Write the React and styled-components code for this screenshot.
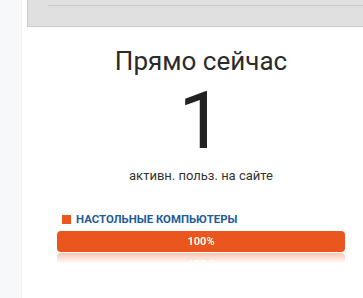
import styled, { createGlobalStyle } from 'styled-components';

const GlobalStyle = createGlobalStyle`
  body {
    margin: 0;
    background: #ffffff;
    font-family: Roboto, 'Liberation Sans', sans-serif;
  }
`;

const Page = styled.div`
  display: flex;
  height: 298px;
  overflow: hidden;
`;

const Sidebar = styled.div`
  width: 21px;
  flex-shrink: 0;
  background: #f7f8fa;
  border-right: 1px solid #eef0f3;
`;

const Main = styled.div`
  flex: 1;
  display: flex;
  flex-direction: column;
`;

const TopBar = styled.div`
  display: flex;
  height: 27px;
  padding-left: 5px;
`;

const Panel = styled.div`
  width: 320px;
  background: #e0e0e0;
  border: 1px solid #cbcbcb;
  border-top: none;
  padding: 5px 10px 0 20px;
`;

const PanelRule = styled.div`
  height: 1px;
  background: #c9c9c9;
`;

const PanelSide = styled.div`
  flex: 1;
  background: #e9e9e9;
`;

const Widget = styled.div`
  width: 288px;
  margin-left: 35px;
  display: flex;
  flex-direction: column;
  align-items: center;
`;

const Title = styled.div`
  margin-top: 19px;
  font-size: 26px;
  line-height: 30px;
  color: #2b2b2b;
`;

const BigNumber = styled.div`
  margin-top: 5px;
  font-size: 80px;
  line-height: 80px;
  font-weight: 400;
  color: #222222;
`;

const Caption = styled.div`
  margin-top: 7px;
  font-size: 13px;
  line-height: 16px;
  color: #333333;
`;

const Legend = styled.div`
  align-self: stretch;
  display: flex;
  align-items: center;
  gap: 5px;
  margin-top: 28px;
  padding-left: 5px;
`;

const Swatch = styled.span`
  width: 9px;
  height: 9px;
  background: ${(props) => props.color};
`;

const LegendLabel = styled.span`
  font-size: 11.4px;
  font-weight: 700;
  color: #1f5c99;
  text-transform: uppercase;
`;

const Bar = styled.div`
  align-self: stretch;
  margin-top: 5px;
  height: 21px;
  border-radius: 4px;
  background: ${(props) => props.color};
  color: #ffffff;
  font-size: 11px;
  font-weight: 700;
  display: flex;
  align-items: center;
  justify-content: center;
  -webkit-box-reflect: below 1px linear-gradient(transparent 50%, rgba(255, 255, 255, 0.35));
`;

const ORANGE = '#ea561d';

export default function App() {
  return (
    <>
      <GlobalStyle />
      <Page>
        <Sidebar />
        <Main>
          <TopBar>
            <Panel>
              <PanelRule />
            </Panel>
            <PanelSide />
          </TopBar>
          <Widget>
            <Title>Прямо сейчас</Title>
            <BigNumber>1</BigNumber>
            <Caption>активн. польз. на сайте</Caption>
            <Legend>
              <Swatch color={ORANGE} />
              <LegendLabel>Настольные компьютеры</LegendLabel>
            </Legend>
            <Bar color={ORANGE}>100%</Bar>
          </Widget>
        </Main>
      </Page>
    </>
  );
}
